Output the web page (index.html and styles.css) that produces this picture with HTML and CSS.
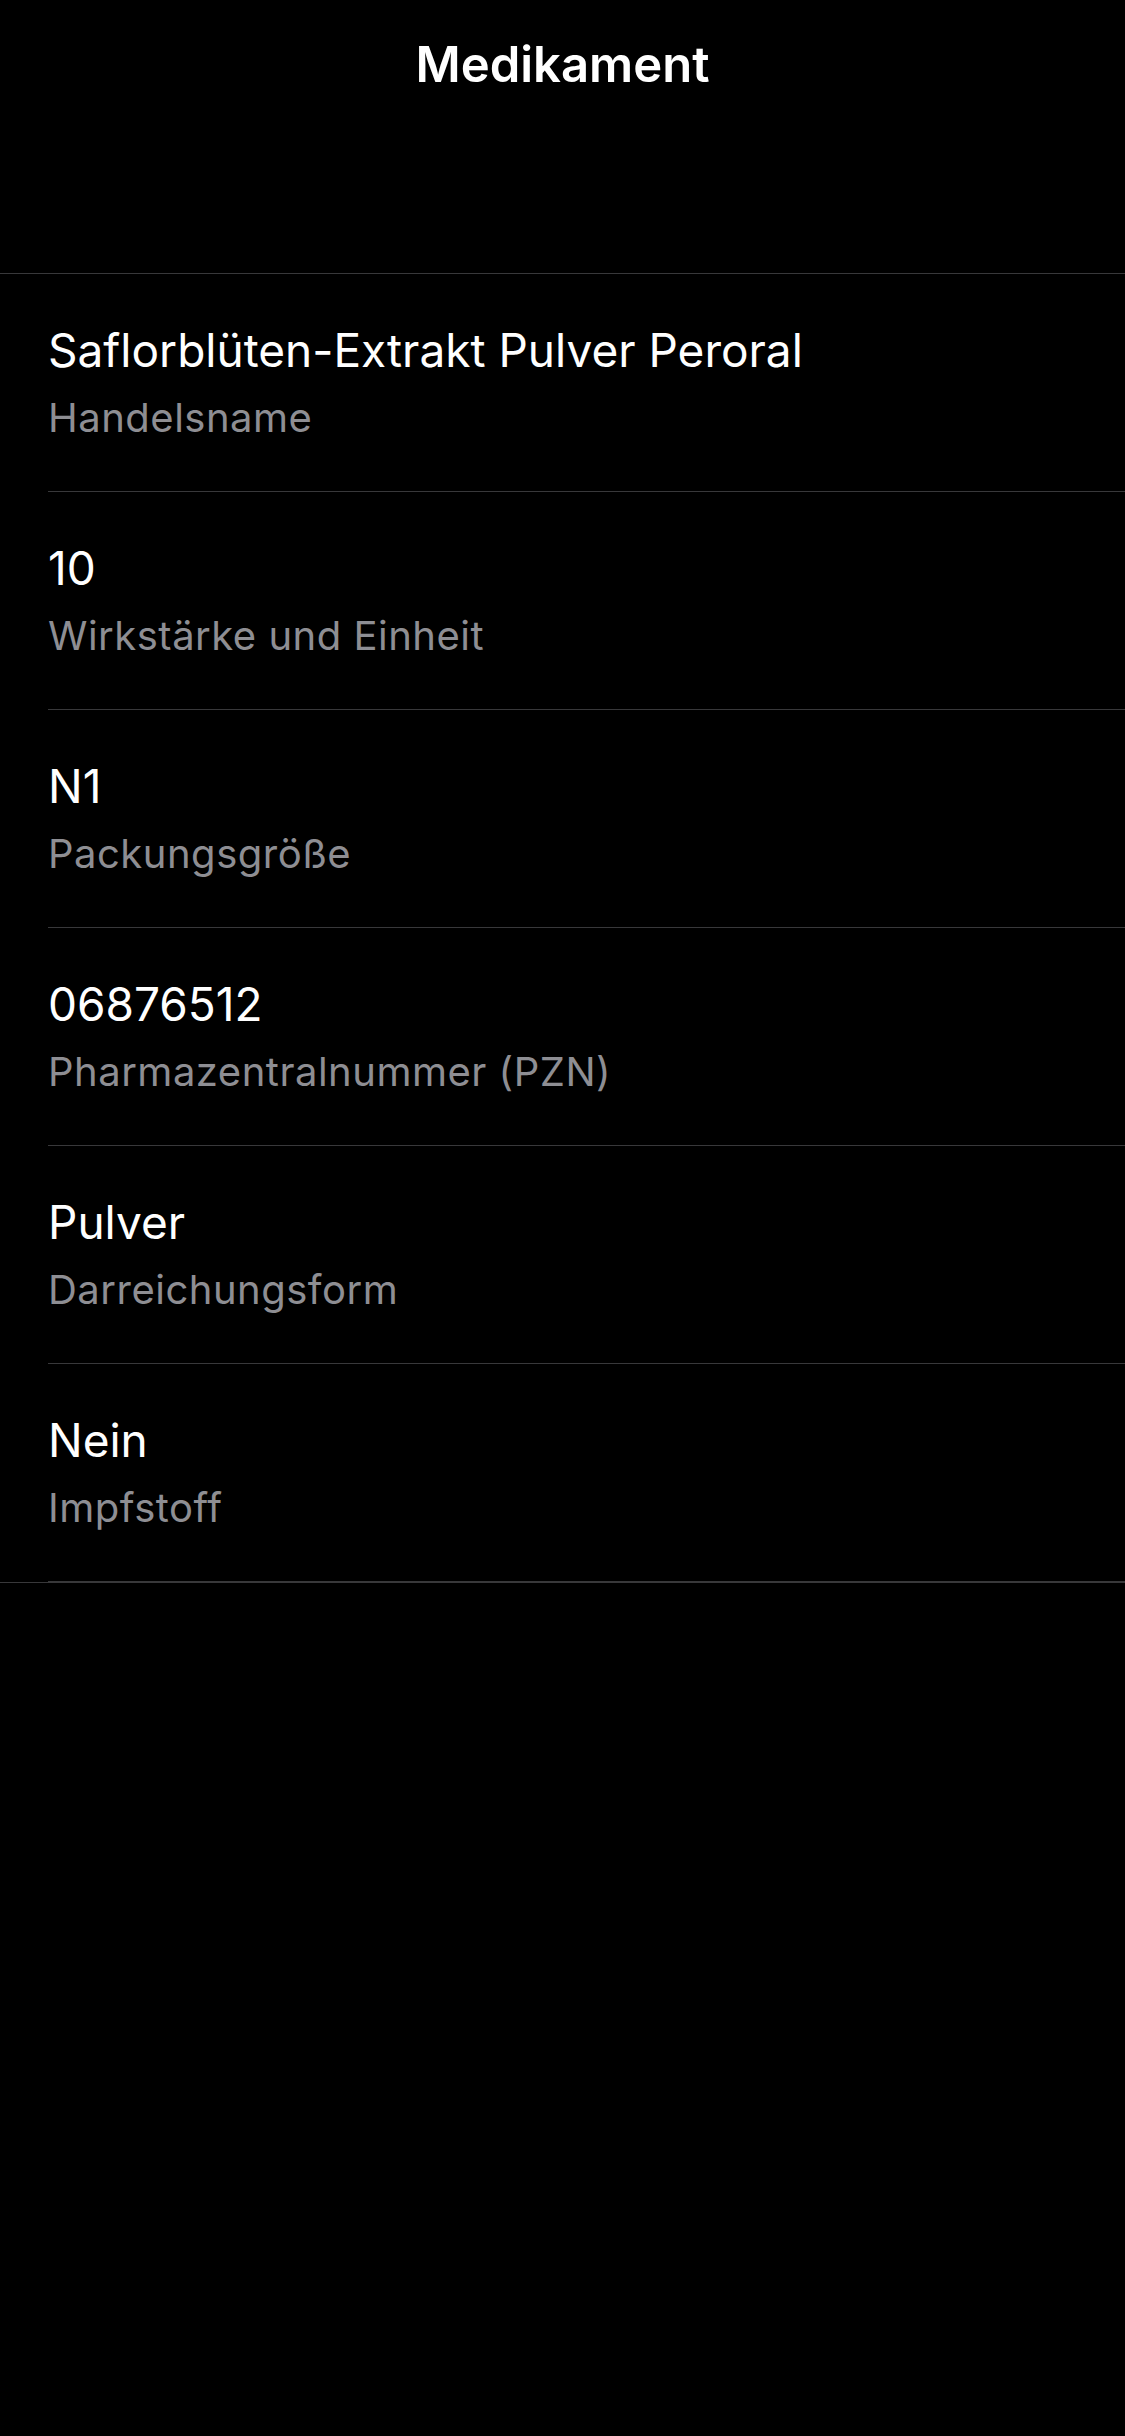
FILE: index.html
```html
<!DOCTYPE html>
<html lang="de">
<head>
<meta charset="utf-8">
<title>Medikament</title>
<link rel="stylesheet" href="styles.css">
</head>
<body>
<header class="nav">
  <h1 class="nav-title">Medikament</h1>
</header>
<ul class="list">
  <li class="row"><div class="value">Saflorblüten-Extrakt Pulver Peroral</div><div class="label">Handelsname</div></li>
  <li class="row"><div class="value">10</div><div class="label">Wirkstärke und Einheit</div></li>
  <li class="row"><div class="value">N1</div><div class="label">Packungsgröße</div></li>
  <li class="row"><div class="value">06876512</div><div class="label">Pharmazentralnummer (PZN)</div></li>
  <li class="row"><div class="value">Pulver</div><div class="label">Darreichungsform</div></li>
  <li class="row"><div class="value">Nein</div><div class="label">Impfstoff</div></li>
</ul>
</body>
</html>
```

FILE: styles.css
```css
html, body {
  margin: 0;
  padding: 0;
  background: #000;
}
body {
  width: 1125px;
  min-height: 2436px;
  font-family: Inter, "Noto Sans", "Liberation Sans", sans-serif;
  color: #fff;
}
.nav {
  height: 274px;
  box-sizing: border-box;
  padding-top: 35px;
  border-bottom: 1px solid #38383a;
}
.nav-title {
  margin: 0;
  text-align: center;
  font-size: 49px;
  line-height: 60px;
  font-weight: 600;
  letter-spacing: 0;
}
.list {
  list-style: none;
  margin: 0;
  padding: 0;
  border-bottom: 1px solid #38383a;
}
.row {
  margin-left: 48px;
  height: 217px;
  border-bottom: 1px solid #38383a;
  display: flex;
  flex-direction: column;
}
.value {
  margin-top: 48px;
  font-size: 46px;
  line-height: 56px;
  font-weight: 400;
  color: #fff;
  white-space: nowrap;
}
.label {
  margin-top: 8px;
  font-size: 40px;
  line-height: 64px;
  letter-spacing: 0.5px;
  color: #8e8e93;
  white-space: nowrap;
}
```
